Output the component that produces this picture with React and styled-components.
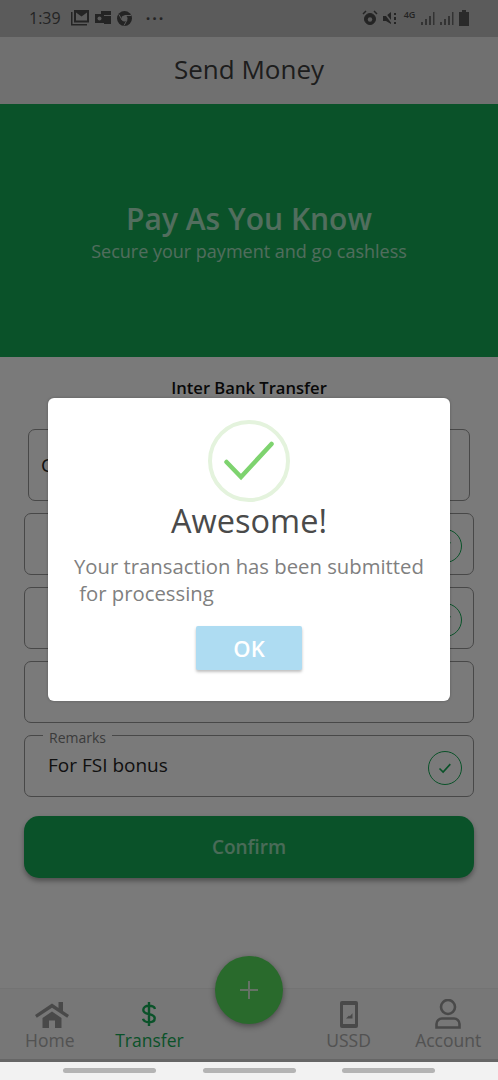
import React from "react";
import styled, { createGlobalStyle } from "styled-components";

const Global = createGlobalStyle`
  html, body { margin: 0; padding: 0; background: #f2f2f2; }
  * { box-sizing: border-box; }
  body { font-family: "Open Sans", "Noto Sans", sans-serif; }
`;

const Page = styled.div`
  width: 498px;
  height: 1080px;
  display: flex;
  flex-direction: column;
  overflow: hidden;
`;
const Screen = styled.div`
  position: relative;
  height: 1062px;
  display: flex;
  flex-direction: column;
  background: #f4f4f4;
`;
const StatusBar = styled.div`
  height: 37px;
  background: #b6b6b6;
  display: flex;
  align-items: center;
  justify-content: space-between;
  padding: 0 29px 1px;
  color: #484848;
`;
const StatusGroup = styled.div`
  display: flex;
  align-items: center;
  gap: ${(p) => p.$gap || 6}px;
`;
const Time = styled.span`
  font-size: 16px;
  margin-right: 4px;
`;
const Header = styled.div`
  height: 67px;
  padding-bottom: 3px;
  background: #e0e0e0;
  display: flex;
  align-items: center;
  justify-content: center;
  font-size: 26px;
  color: #3a3a3a;
`;
const Banner = styled.div`
  height: 253px;
  padding-top: 4px;
  background: #14a452;
  display: flex;
  flex-direction: column;
  align-items: center;
  justify-content: center;
`;
const BannerTitle = styled.div`
  font-size: 30px;
  font-weight: 600;
  line-height: 36px;
  color: #ffffff;
  opacity: 0.62;
`;
const BannerSub = styled.div`
  font-size: 18px;
  line-height: 28px;
  color: #ffffff;
  opacity: 0.6;
`;
const Form = styled.div`
  flex: 1;
  padding: 20px 24px 0;
  display: flex;
  flex-direction: column;
`;
const SectionTitle = styled.div`
  text-align: center;
  font-size: 16.6px;
  line-height: 22px;
  font-weight: 600;
  color: #111;
  margin-bottom: 30px;
`;
const Field = styled.div`
  position: relative;
  height: ${(p) => p.$h || 62}px;
  margin: 0 ${(p) => p.$inset || 0}px ${(p) => (p.$last ? 19 : 12)}px;
  border: 1.5px solid #909090;
  border-radius: 7px;
  display: flex;
  align-items: center;
  justify-content: space-between;
  padding: 0 11px 0 ${(p) => (p.$inset ? 12 : 23)}px;
  font-size: 19px;
  color: #222;
`;
const FieldValue = styled.span`
  margin-top: -2px;
`;
const FieldLegend = styled.span`
  position: absolute;
  top: -6px;
  left: 18px;
  padding: 0 6px;
  background: #f4f4f4;
  font-size: 14px;
  line-height: 16px;
  color: #777;
`;
const CheckMark = styled.span`
  width: 34px;
  height: 34px;
  margin-top: 3px;
  border: 1.5px solid #14a452;
  border-radius: 50%;
  display: flex;
  align-items: center;
  justify-content: center;
  color: #14a452;
`;
const ConfirmButton = styled.div`
  height: 62px;
  background: #14a452;
  border-radius: 15px;
  box-shadow: 0 3px 5px rgba(0, 0, 0, 0.35);
  display: flex;
  align-items: center;
  justify-content: center;
  color: #fff;
  font-size: 19px;
  font-weight: 600;
`;
const ConfirmLabel = styled.span`
  opacity: 0.55;
`;
const Nav = styled.div`
  position: relative;
  height: 74px;
  display: grid;
  grid-template-columns: repeat(5, 1fr);
  background: #eeeeee;
  border-top: 1px solid #e6e6e6;
  border-bottom: 3px solid #cccccc;
  padding-top: 10px;
`;
const NavItem = styled.div`
  display: flex;
  flex-direction: column;
  align-items: center;
  justify-content: flex-start;
  height: 60px;
  color: ${(p) => (p.$active ? "#14a452" : "#a4a4a4")};
  font-size: 17.5px;
  line-height: 22px;
`;
const NavIcon = styled.span`
  display: flex;
  align-items: center;
  justify-content: center;
  height: 30px;
  color: ${(p) => (p.$active ? "#14a452" : "#929292")};
  transform: translateX(${(p) => p.$shift || 0}px);
`;
const Fab = styled.div`
  position: absolute;
  left: 215px;
  top: -33px;
  width: 68px;
  height: 68px;
  border-radius: 50%;
  background: #52d458;
  box-shadow: 0 2px 6px rgba(0, 0, 0, 0.4);
  display: flex;
  align-items: center;
  justify-content: center;
  color: #e8e8e8;
`;
const Overlay = styled.div`
  position: absolute;
  inset: 0;
  background: rgba(0, 0, 0, 0.5);
  padding: 398px 48px 0;
`;
const Modal = styled.div`
  height: 303px;
  background: #fff;
  border-radius: 6px;
  box-shadow: 0 0 3px rgba(0, 0, 0, 0.25);
  display: flex;
  flex-direction: column;
  align-items: center;
  padding-top: 22px;
`;
const SuccessRing = styled.div`
  width: 82px;
  height: 82px;
  border: 4px solid #e4f3dd;
  border-radius: 50%;
  display: flex;
  align-items: center;
  justify-content: center;
`;
const ModalTitle = styled.div`
  font-size: 32.5px;
  line-height: 38px;
  color: #4a4a4a;
`;
const ModalText = styled.div`
  width: 100%;
  padding: 0 0 0 26px;
  margin-top: 13px;
  font-size: 20.3px;
  line-height: 27px;
  color: #808080;
  white-space: pre;
`;
const OkButton = styled.div`
  width: 106px;
  height: 44px;
  margin-top: 19px;
  background: #aedcf2;
  border-radius: 2px;
  box-shadow: 0 2px 3px rgba(0, 0, 0, 0.25);
  display: flex;
  align-items: center;
  justify-content: center;
  color: #fff;
  font-size: 22px;
  font-weight: 600;
`;
const SystemBar = styled.div`
  height: 18px;
  background: #f2f2f2;
  display: grid;
  grid-template-columns: 93px 93px 93px;
  justify-content: space-between;
  padding: 6px 63px 0;
`;
const Pill = styled.div`
  height: 5px;
  border-radius: 3px;
  background: #b4b4b4;
`;

const Check = () => (
  <svg width="16" height="16" viewBox="0 0 16 16" fill="none" stroke="currentColor" strokeWidth="1.6">
    <path d="M2.5 8.5l3.6 3.6 7.2-8" />
  </svg>
);

const Gallery = () => (
  <svg width="18" height="17" viewBox="0 0 18 17" fill="#484848">
    <path d="M0 2h1.500v12H16v1.500H0z" />
    <path fillRule="evenodd" d="M3 0h15v12.500H3zM5 2.500v8h11v-8l-5.500 4z" />
  </svg>
);
const Outlook = () => (
  <svg width="16" height="14" viewBox="0 0 16 14" fill="#484848">
    <path d="M6 0h10v4H6zM9 5h7v8H9z" />
    <rect x="0" y="3" width="9" height="9" />
    <circle cx="4.500" cy="7.500" r="2" fill="#b6b6b6" />
  </svg>
);
const Chrome = () => (
  <svg width="15" height="15" viewBox="0 0 15 15">
    <circle cx="7.500" cy="7.500" r="7.500" fill="#484848" />
    <circle cx="7.500" cy="7.500" r="3" fill="#b6b6b6" />
    <path d="M7.500 4.500H14M5 9L2 3.500M10 9l-3 5.500" stroke="#b6b6b6" strokeWidth="1" />
  </svg>
);
const Alarm = () => (
  <svg width="16" height="16" viewBox="0 0 16 16" fill="none" stroke="#484848">
    <circle cx="8" cy="9" r="5.500" fill="#484848" />
    <circle cx="8" cy="9.500" r="2.200" fill="#b6b6b6" stroke="none" />
    <path d="M1 4l3-3M15 4l-3-3" strokeWidth="1.500" />
  </svg>
);
const Mute = () => (
  <svg width="15" height="15" viewBox="0 0 15 15" fill="#484848">
    <path d="M0 5h3l5-4v12l-5-3H0z" />
    <path d="M1 1l9 12" stroke="#b6b6b6" strokeWidth="1.500" />
    <path d="M11 2h2v2h-2zM11 6h2v3h-2zM11 11h2v2h-2z" />
  </svg>
);
const Signal = () => (
  <svg width="14" height="15" viewBox="0 0 14 15" fill="#666">
    <rect x="0" y="11" width="2" height="3" />
    <rect x="4" y="8" width="2" height="6" />
    <rect x="8" y="5" width="2" height="9" />
    <rect x="12" y="1" width="1.500" height="13" />
  </svg>
);
const Battery = () => (
  <svg width="10" height="16" viewBox="0 0 10 16" fill="#555">
    <path d="M3 0h4v2h3v14H0V2h3z" />
  </svg>
);
const NetTag = styled.span`
  font-size: 9px;
  line-height: 8px;
  width: 13px;
  padding-bottom: 7px;
  text-align: center;
  font-weight: 600;
`;
const Dots = styled.span`
  font-size: 16px;
  font-weight: 700;
  letter-spacing: 2px;
  margin-left: 8px;
  line-height: 12px;
`;

const HomeIcon = () => (
  <svg width="34" height="28" viewBox="0 0 34 28" fill="currentColor">
    <path d="M17 3.500L0 15l1.800 2.800L17 7.800l15.200 10L34 15l-6-4V2h-4.500v6z" />
    <path d="M7.500 18L17 11.500l9.500 6.500v10H20v-7.500h-6V28H7.500z" />
  </svg>
);
const DollarIcon = () => (
  <svg width="14" height="24" viewBox="0 0 14 24" fill="none" stroke="currentColor" strokeWidth="2.400">
    <path d="M7 0v24M13 7C12.500 4.800 10.500 3.800 7 3.800 3.500 3.800 1.300 5.300 1.300 8c0 5.800 11.400 2.500 11.400 8.200 0 2.700-2.300 4-5.700 4-3.200 0-5.300-1.200-6-3.400" />
  </svg>
);
const PhoneIcon = () => (
  <svg width="18" height="27" viewBox="0 0 18 27" fill="currentColor">
    <path fillRule="evenodd" d="M2 0h14a2 2 0 0 1 2 2v23a2 2 0 0 1-2 2H2a2 2 0 0 1-2-2V2a2 2 0 0 1 2-2zM3 4v19h12V4z" />
    <path d="M6 17.500l3-3 .8.800 2.700-3v5.200z" />
  </svg>
);
const UserIcon = () => (
  <svg width="26" height="30" viewBox="0 0 26 30" fill="none" stroke="currentColor" strokeWidth="2.600">
    <circle cx="13" cy="8" r="7" />
    <path d="M7 19.500h12a5.500 5.500 0 0 1 5.500 5.500v3.500H1.500V25A5.500 5.500 0 0 1 7 19.500z" />
  </svg>
);

export default function App() {
  return (
    <Page>
      <Global />
      <Screen>
        <StatusBar>
          <StatusGroup $gap={6}>
            <Time>1:39</Time>
            <Gallery />
            <Outlook />
            <Chrome />
            <Dots>···</Dots>
          </StatusGroup>
          <StatusGroup $gap={5}>
            <Alarm />
            <Mute />
            <NetTag>4G</NetTag>
            <Signal />
            <Signal />
            <Battery />
          </StatusGroup>
        </StatusBar>
        <Header>Send Money</Header>
        <Banner>
          <BannerTitle>Pay As You Know</BannerTitle>
          <BannerSub>Secure your payment and go cashless</BannerSub>
        </Banner>
        <Form>
          <SectionTitle>Inter Bank Transfer</SectionTitle>
          <Field $h={72} $inset={4}>C</Field>
          <Field>
            <span />
            <CheckMark><Check /></CheckMark>
          </Field>
          <Field>
            <span />
            <CheckMark><Check /></CheckMark>
          </Field>
          <Field />
          <Field $last>
            <FieldLegend>Remarks</FieldLegend>
            <FieldValue>For FSI bonus</FieldValue>
            <CheckMark><Check /></CheckMark>
          </Field>
          <ConfirmButton><ConfirmLabel>Confirm</ConfirmLabel></ConfirmButton>
        </Form>
        <Nav>
          <NavItem><NavIcon $shift={2}><HomeIcon /></NavIcon>Home</NavItem>
          <NavItem $active><NavIcon $active><DollarIcon /></NavIcon>Transfer</NavItem>
          <NavItem />
          <NavItem><NavIcon><PhoneIcon /></NavIcon>USSD</NavItem>
          <NavItem><NavIcon><UserIcon /></NavIcon>Account</NavItem>
          <Fab>
            <svg width="20" height="20" viewBox="0 0 20 20" stroke="currentColor" strokeWidth="2" opacity="0.8">
              <path d="M10 1v18M1 10h18" />
            </svg>
          </Fab>
        </Nav>
        <Overlay>
          <Modal>
            <SuccessRing>
              <svg width="50" height="40" viewBox="0 0 50 40" fill="none" stroke="#7ed36f" strokeWidth="4.500" strokeLinecap="round">
                <path d="M2.500 21L17 36 47.500 3" />
              </svg>
            </SuccessRing>
            <ModalTitle>Awesome!</ModalTitle>
            <ModalText>{"Your transaction has been submitted\n for processing"}</ModalText>
            <OkButton>OK</OkButton>
          </Modal>
        </Overlay>
      </Screen>
      <SystemBar>
        <Pill />
        <Pill />
        <Pill />
      </SystemBar>
    </Page>
  );
}
